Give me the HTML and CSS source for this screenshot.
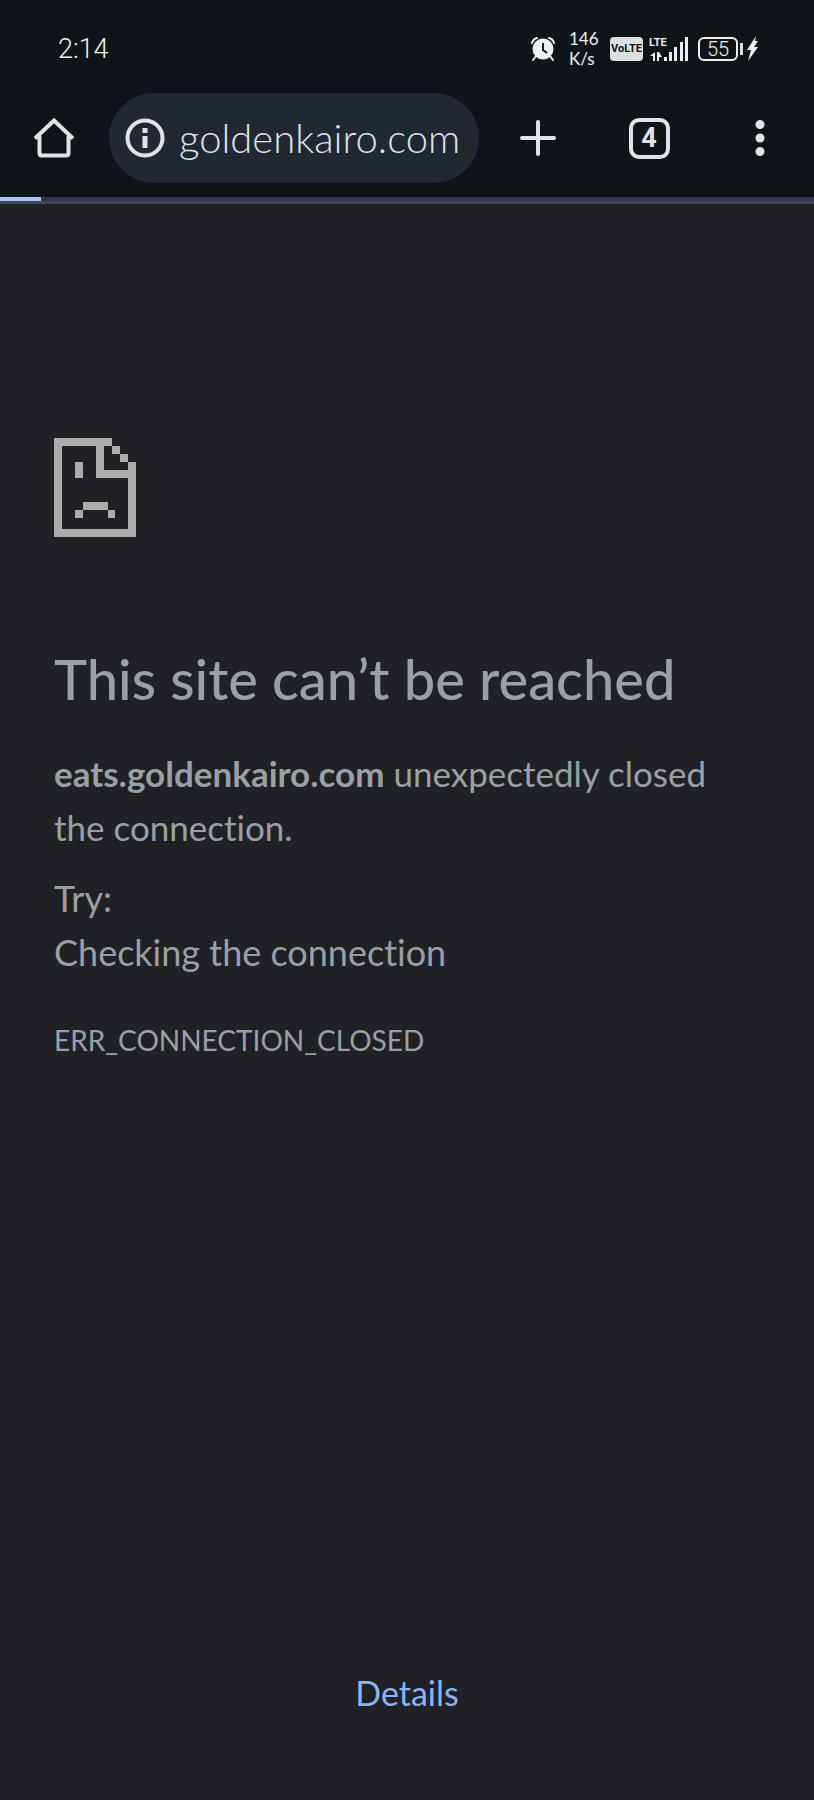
FILE: index.html
```
<!DOCTYPE html>
<html lang="en">
<head>
<meta charset="utf-8">
<meta name="viewport" content="width=device-width, initial-scale=1">
<title>goldenkairo.com</title>
<link rel="stylesheet" href="styles.css">
</head>
<body>
<header class="chrome">
  <div class="status">
    <time class="clock">2:14</time>
    <div class="indicators">
      <svg class="alarm" width="24" height="24" viewBox="0 0 24 24" aria-hidden="true">
        <circle cx="12" cy="12" r="10.500" fill="#eef1f4"/>
        <path d="M1 6Q2 2 6 1M18 1q4 1 5 5M5 19l-3 4M19 19l3 4" fill="none" stroke="#eef1f4" stroke-width="2" stroke-linecap="round"/>
        <path d="M12 6v7l4 3" fill="none" stroke="#0f1418" stroke-width="2"/>
      </svg>
      <div class="speed"><span>146</span><span>K/s</span></div>
      <span class="volte">VoLTE</span>
      <div class="signal">
        <span class="lte">LTE</span>
        <svg width="40" height="24" viewBox="0 0 40 24" aria-hidden="true">
          <g fill="#eef1f4">
            <path d="M15 20h3v4h-3zM20 15h3v9h-3zM25 10h3v14h-3zM31 5h3v19h-3zM36 0h3v24h-3z"/>
            <path d="M6 15v9H4v-5H1zM8 15h2l3 5h-3v4H8z"/>
          </g>
        </svg>
      </div>
      <div class="battery">
        <span class="level">55</span>
        <span class="cap"></span>
        <svg width="12" height="26" viewBox="0 0 12 26" aria-hidden="true"><path d="M9 0L0 14h4L1 25 11 11H7l4-6H8z" fill="#eef1f4"/></svg>
      </div>
    </div>
  </div>
  <nav class="toolbar">
    <button class="tool" aria-label="Home">
      <svg width="42" height="42" viewBox="0 0 42 42" aria-hidden="true"><path d="M2 21.500L21 3.500 40 21.500M6.500 19v17q0 2.500 2.500 2.500h24q2.500 0 2.500-2.500V19" fill="none" stroke="#e3e2e9" stroke-width="4"/></svg>
    </button>
    <div class="omnibox">
      <button class="info" aria-label="Site information">
        <svg width="40" height="40" viewBox="0 0 40 40" aria-hidden="true"><circle cx="20" cy="20" r="17.500" fill="none" stroke="#e3e2e9" stroke-width="4"/><path d="M17.500 10h5v5h-5zM17.500 18h5v12h-5z" fill="#e3e2e9"/></svg>
      </button>
      <input class="url" type="text" aria-label="Address" value="goldenkairo.com">
    </div>
    <div class="actions">
      <button class="tool" aria-label="New tab">
        <svg width="36" height="36" viewBox="0 0 36 36" aria-hidden="true"><path d="M18 2v32M2 18h32" stroke="#e3e2e9" stroke-width="4" stroke-linecap="round"/></svg>
      </button>
      <button class="tool" aria-label="Switch tabs"><span class="tabs">4</span></button>
      <button class="tool" aria-label="Menu">
        <svg width="10" height="36" viewBox="0 0 10 36" aria-hidden="true"><g fill="#e3e2e9"><circle cx="5" cy="4.500" r="4.500"/><circle cx="5" cy="18" r="4.500"/><circle cx="5" cy="31.500" r="4.500"/></g></svg>
      </button>
    </div>
  </nav>
  <div class="progress" role="progressbar" aria-label="Loading" aria-valuenow="5" aria-valuemin="0" aria-valuemax="100"><div class="bar" style="width:5%"></div></div>
</header>
<main class="error">
  <svg class="sad" width="82" height="99" viewBox="0 0 82 99" shape-rendering="crispEdges" aria-hidden="true">
    <path fill="#acacac" d="M0 0h58v8h8v8h8v8h8v75H0zM8 8v83h66V40H42V8zM50 8v24h24v-8h-8v-8h-8V8zM21 24h8v16h-8zM29 64h25v8h7v8h-7v-8H29v8h-8v-8h8z" fill-rule="evenodd"/>
  </svg>
  <h1 class="title">This site can’t be reached</h1>
  <p class="text"><strong>eats.goldenkairo.com</strong> unexpectedly closed the connection.</p>
  <div class="tips">
    <p class="try">Try:</p>
    <ul class="list"><li>Checking the connection</li></ul>
  </div>
  <p class="code">ERR_CONNECTION_CLOSED</p>
  <button class="details">Details</button>
</main>
</body>
</html>
```
FILE: styles.css
```
* { box-sizing: border-box; }
body {
  margin: 0;
  min-height: 100vh;
  display: flex;
  flex-direction: column;
  background: #202125;
  color: #9aa0a6;
  font-family: Lato, "Noto Sans", sans-serif;
  font-variant-ligatures: none;
}
button {
  border: 0;
  padding: 0;
  background: none;
  color: inherit;
  font: inherit;
  cursor: pointer;
}
svg { display: block; }
h1, p, ul { margin: 0; padding: 0; }

.chrome { background: #0f1418; color: #eef1f4; }
.status {
  display: flex;
  justify-content: space-between;
  align-items: center;
  height: 93px;
  padding: 4px 55px 0 58px;
}
.clock { font: 300 27px/32px Roboto, sans-serif; }
.indicators { display: flex; align-items: center; }
.speed {
  display: flex;
  flex-direction: column;
  width: 28px;
  margin-left: 14px;
  font: 17px/20px Lato, sans-serif;
}
.volte {
  width: 33px;
  margin-left: 13px;
  border-radius: 4px;
  background: #dcdfe2;
  color: #0f1418;
  font: bold 11px/24px Roboto, sans-serif;
  text-align: center;
}
.signal { position: relative; margin-left: 6px; }
.lte {
  position: absolute;
  top: 0;
  left: 0;
  font: bold 11px/12px Roboto, sans-serif;
}
.battery { display: flex; align-items: center; margin-left: 9px; }
.level {
  width: 40px;
  border: 2px solid #eef1f4;
  border-radius: 6px;
  font: 300 20px/20px Roboto, sans-serif;
  text-align: center;
}
.cap { width: 3px; height: 12px; margin: 0 4px 0 2px; background: #dcdfe2; }

.toolbar { display: flex; align-items: center; padding: 0 14px 14px; }
.tool {
  display: flex;
  flex: none;
  justify-content: center;
  align-items: center;
  width: 80px;
  height: 80px;
}
.omnibox {
  display: flex;
  flex: 1;
  align-items: center;
  gap: 14px;
  min-width: 0;
  height: 90px;
  margin: 0 19px 0 15px;
  padding: 0 10px 0 16px;
  border-radius: 45px;
  background: #212832;
}
.info { flex: none; }
.url {
  flex: 1;
  min-width: 0;
  border: 0;
  padding: 0;
  outline: 0;
  background: none;
  color: #dfe3ea;
  font: 300 40px/48px Lato, sans-serif;
}
.actions { display: flex; gap: 31px; }
.tabs {
  width: 41px;
  height: 41px;
  border: 4px solid #e3e2e9;
  border-radius: 10px;
  color: #e3e2e9;
  font: bold 27px/33px Roboto, sans-serif;
}
.progress { height: 7px; border-bottom: 3px solid #444650; background: #303848; }
.bar { height: 4px; background: #a8c7fa; }

.error {
  display: flex;
  flex: 1;
  flex-direction: column;
  padding: 234px 54px 80px;
  font-size: 36px;
  line-height: 54px;
}
.title { margin-top: 110px; font-size: 56px; font-weight: 500; line-height: 64px; }
.text { margin-top: 35px; font-size: 35px; }
.tips { margin-top: 17px; }
.list { list-style: none; }
.code { margin-top: 34px; font-size: 28px; }
.details {
  align-self: center;
  margin-top: auto;
  color: #8ab4f8;
  font-size: 34px;
}
```
